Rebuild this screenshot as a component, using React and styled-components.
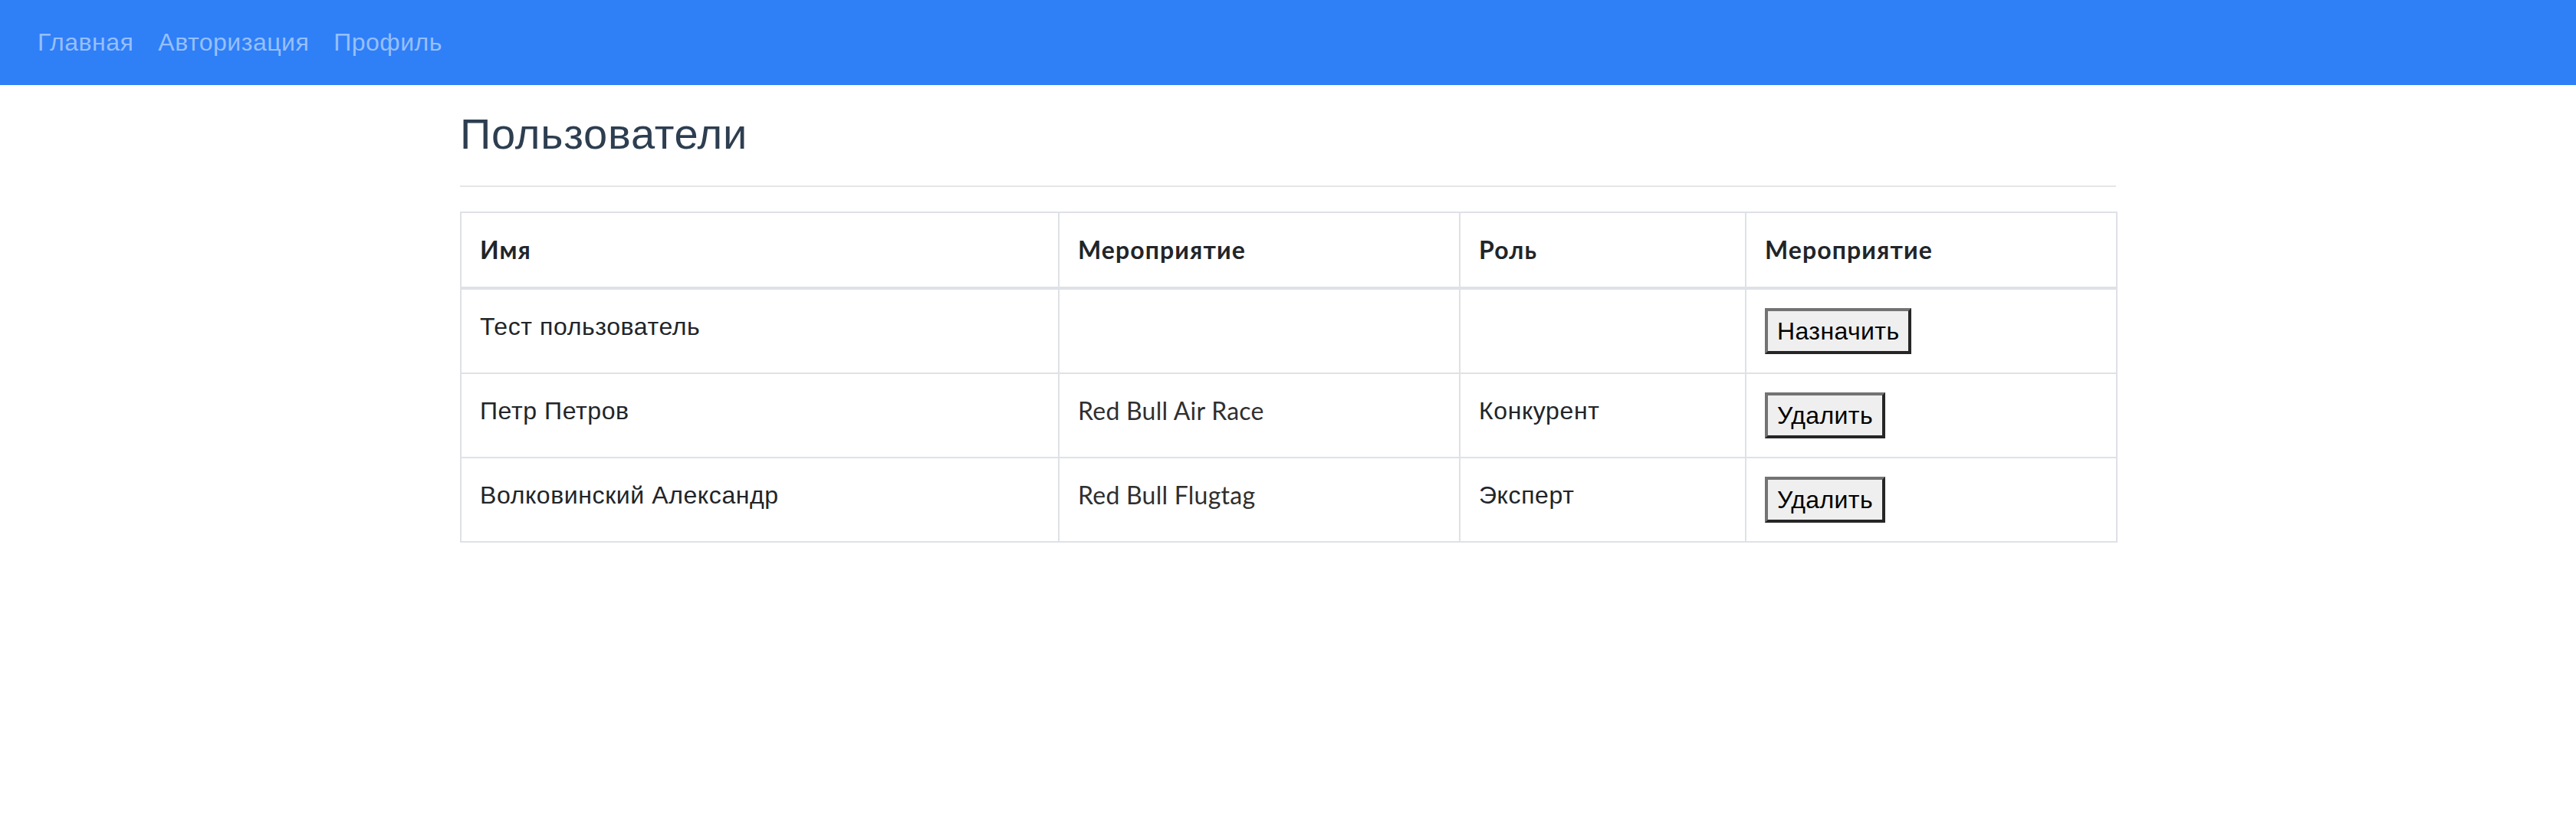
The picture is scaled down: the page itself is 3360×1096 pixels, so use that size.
import React from 'react';
import styled, { createGlobalStyle } from 'styled-components';

const GlobalStyle = createGlobalStyle`
    html, body {
        margin: 0;
        padding: 0;
        background: #ffffff;
        font-family: "Liberation Sans", Arial, sans-serif;
        color: #212529;
    }
`;

const NavBar = styled.nav`
    height: 111px;
    background-color: #2f7ff7;
    display: flex;
    flex-direction: row;
    align-items: center;
    padding-left: 33px;
`;

const NavLink = styled.a`
    font-size: 32px;
    letter-spacing: 0.5px;
    color: #97bffb;
    text-decoration: none;
    padding: 0 16px;
    cursor: pointer;
`;

const Container = styled.main`
    width: 2160px;
    margin: 0 auto;
    padding-top: 30px;
`;

const Title = styled.h2`
    margin: 0;
    font-size: 56px;
    font-weight: 400;
    letter-spacing: 0.8px;
    line-height: 1.2;
    color: #2d3e50;
`;

const Rule = styled.hr`
    margin: 34px 0 32px;
    border: 0;
    border-top: 2px solid #e6e6e6;
`;

const Table = styled.table`
    width: 100%;
    table-layout: fixed;
    border-collapse: collapse;
    border: 2px solid #dee2e6;
`;

const Th = styled.th`
    text-align: left;
    vertical-align: top;
    padding: 24px;
    font-family: Lato, "Open Sans", sans-serif;
    font-weight: 700;
    font-size: 32px;
    letter-spacing: 1.1px;
    line-height: 48px;
    color: #212529;
    border: 2px solid #dee2e6;
    border-bottom-width: 4px;
`;

const Td = styled.td`
    vertical-align: top;
    padding: 24px;
    font-size: 32px;
    line-height: 48px;
    height: 60px;
    border: 2px solid #dee2e6;
    font-family: ${p => (p.$event ? 'Lato, "Open Sans", sans-serif' : '"Liberation Sans", Arial, sans-serif')};
    letter-spacing: ${p => (p.$event ? '0.25px' : '0.6px')};
    color: ${p => (p.$event ? '#2f2f2f' : '#212529')};
`;

const ActionButton = styled.button`
    display: block;
    height: 60px;
    padding: 0 12px;
    font-family: "Liberation Sans", Arial, sans-serif;
    font-size: 32px;
    letter-spacing: 0.4px;
    color: #000000;
    background: #efefef;
    border: 4px solid;
    border-color: #737373 #262626 #262626 #737373;
    border-radius: 0;
`;

const users = [
    { name: 'Тест пользователь', event: '', role: '', action: 'Назначить' },
    { name: 'Петр Петров', event: 'Red Bull Air Race', role: 'Конкурент', action: 'Удалить' },
    { name: 'Волковинский Александр', event: 'Red Bull Flugtag', role: 'Эксперт', action: 'Удалить' },
];

export default function App() {
    return (
        <>
            <GlobalStyle />
            <NavBar>
                <NavLink>Главная</NavLink>
                <NavLink>Авторизация</NavLink>
                <NavLink>Профиль</NavLink>
            </NavBar>
            <Container>
                <Title>Пользователи</Title>
                <Rule />
                <Table>
                    <colgroup>
                        <col style={{ width: 780 }} />
                        <col style={{ width: 523 }} />
                        <col style={{ width: 373 }} />
                        <col style={{ width: 484 }} />
                    </colgroup>
                    <thead>
                        <tr>
                            <Th>Имя</Th>
                            <Th>Мероприятие</Th>
                            <Th>Роль</Th>
                            <Th>Мероприятие</Th>
                        </tr>
                    </thead>
                    <tbody>
                        {users.map(u => (
                            <tr key={u.name}>
                                <Td>{u.name}</Td>
                                <Td $event>{u.event}</Td>
                                <Td>{u.role}</Td>
                                <Td>
                                    <ActionButton>{u.action}</ActionButton>
                                </Td>
                            </tr>
                        ))}
                    </tbody>
                </Table>
            </Container>
        </>
    );
}
